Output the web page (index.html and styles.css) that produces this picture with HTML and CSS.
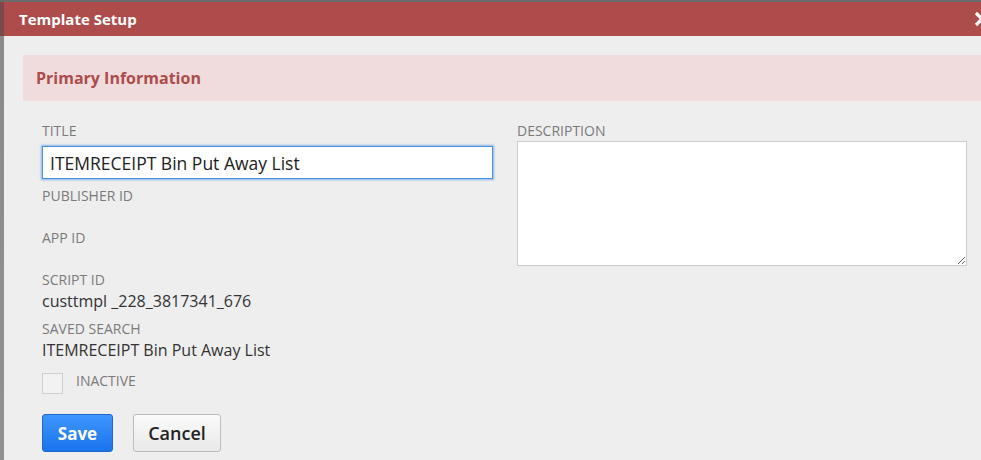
FILE: index.html
```html
<!DOCTYPE html>
<html>
<head>
<meta charset="utf-8">
<link rel="stylesheet" href="styles.css">
</head>
<body>
<div class="backdrop">
  <div class="edge"></div>
  <div class="dialog">
    <div class="header">
      <span class="htitle">Template Setup</span>
      <svg class="close" width="16" height="16" viewBox="0 0 16 16"><path d="M2 2 L14 14 M14 2 L2 14" stroke="#fff" stroke-width="3.2" stroke-linecap="butt"/></svg>
    </div>
    <div class="body">
      <div class="section">Primary Information</div>
      <div class="cols">
        <div class="col left">
          <div class="label l-title">TITLE</div>
          <input class="input" type="text" value="ITEMRECEIPT Bin Put Away List">
          <div class="label l-pub">PUBLISHER ID</div>
          <div class="label l-app">APP ID</div>
          <div class="label l-script">SCRIPT ID</div>
          <div class="value">custtmpl _228_3817341_676</div>
          <div class="label l-saved">SAVED SEARCH</div>
          <div class="value">ITEMRECEIPT Bin Put Away List</div>
          <div class="check-row">
            <span class="checkbox"></span>
            <span class="label check-label">INACTIVE</span>
          </div>
          <div class="buttons">
            <button class="btn save">Save</button>
            <button class="btn cancel">Cancel</button>
          </div>
        </div>
        <div class="col right">
          <div class="label l-title">DESCRIPTION</div>
          <textarea class="textarea"></textarea>
        </div>
      </div>
    </div>
  </div>
</div>
</body>
</html>
```
FILE: styles.css
```css
html, body {
  margin: 0;
  padding: 0;
  width: 981px;
  height: 460px;
  overflow: hidden;
  background: #6b6b6b;
  font-family: "Open Sans", "Liberation Sans", sans-serif;
}
.backdrop {
  display: flex;
  height: 460px;
  padding-top: 2px;
  box-sizing: border-box;
}
.edge {
  width: 4px;
  flex: none;
  background: linear-gradient(to bottom, #7a4a4a 0, #7a4a4a 34px, #8a8a8a 34px, #909090 100%);
}
.dialog {
  flex: 1;
  background: #eeeeee;
  display: flex;
  flex-direction: column;
  overflow: hidden;
}
.header {
  height: 34px;
  background: #ad4c4b;
  display: flex;
  align-items: center;
  padding-left: 15px;
  flex: none;
}
.htitle {
  color: #fff;
  font-weight: 700;
  font-size: 15px;
  flex: 1;
}
.close {
  flex: none;
  margin-right: -9px;
}
.body {
  padding: 19px 0 0 19px;
}
.section {
  height: 46px;
  background: #f0dcdc;
  color: #ad4c4b;
  font-weight: 700;
  font-size: 16px;
  display: flex;
  align-items: center;
  padding-left: 13px;
}
.cols {
  display: flex;
  padding: 21px 0 0 19px;
}
.col.left {
  width: 451px;
  display: flex;
  flex-direction: column;
}
.col.right {
  margin-left: 24px;
  width: 450px;
  display: flex;
  flex-direction: column;
}
.label {
  color: #7a7a7a;
  font-size: 14px;
  line-height: 18px;
}
.input {
  margin-top: 6px;
  width: 451px;
  height: 33px;
  box-sizing: border-box;
  border: 1px solid #4a90e2;
  box-shadow: 0 0 2px 1px rgba(74, 144, 226, 0.6);
  outline: none;
  padding: 0 7px;
  font-family: "Open Sans", "Liberation Sans", sans-serif;
  font-size: 17.5px;
  color: #222;
  background: #fff;
}
.l-pub { margin-top: 8px; }
.l-app { margin-top: 24px; }
.l-script { margin-top: 24px; }
.value {
  color: #333;
  font-size: 16px;
  line-height: 20px;
  margin-top: 2px;
}
.l-saved { margin-top: 9px; }
.check-row {
  display: flex;
  align-items: center;
  margin-top: 12px;
}
.checkbox {
  width: 19px;
  height: 19px;
  border: 1px solid #cfcfcf;
  background: #f2f2f2;
  margin-right: 13px;
}
.check-label {
  padding-bottom: 4px;
}
.buttons {
  display: flex;
  gap: 20px;
  margin-top: 20px;
}
.btn {
  height: 38px;
  border-radius: 3px;
  font-family: "Open Sans", "Liberation Sans", sans-serif;
  font-size: 17px;
  padding: 0;
}
.save {
  width: 71px;
  background: linear-gradient(#3f96ff, #1a74ec);
  border: 1px solid #1f66c7;
  color: #fff;
  font-weight: 700;
}
.cancel {
  width: 88px;
  background: linear-gradient(#fafafa, #e9e9e9);
  border: 1px solid #bcbcbc;
  color: #222;
  font-weight: 600;
  font-size: 18px;
}
.col.right .l-title { margin-bottom: 1px; }
.textarea {
  width: 450px;
  height: 125px;
  box-sizing: border-box;
  border: 1px solid #cccccc;
  background: #fff;
  resize: vertical;
  margin: 0;
}
```
